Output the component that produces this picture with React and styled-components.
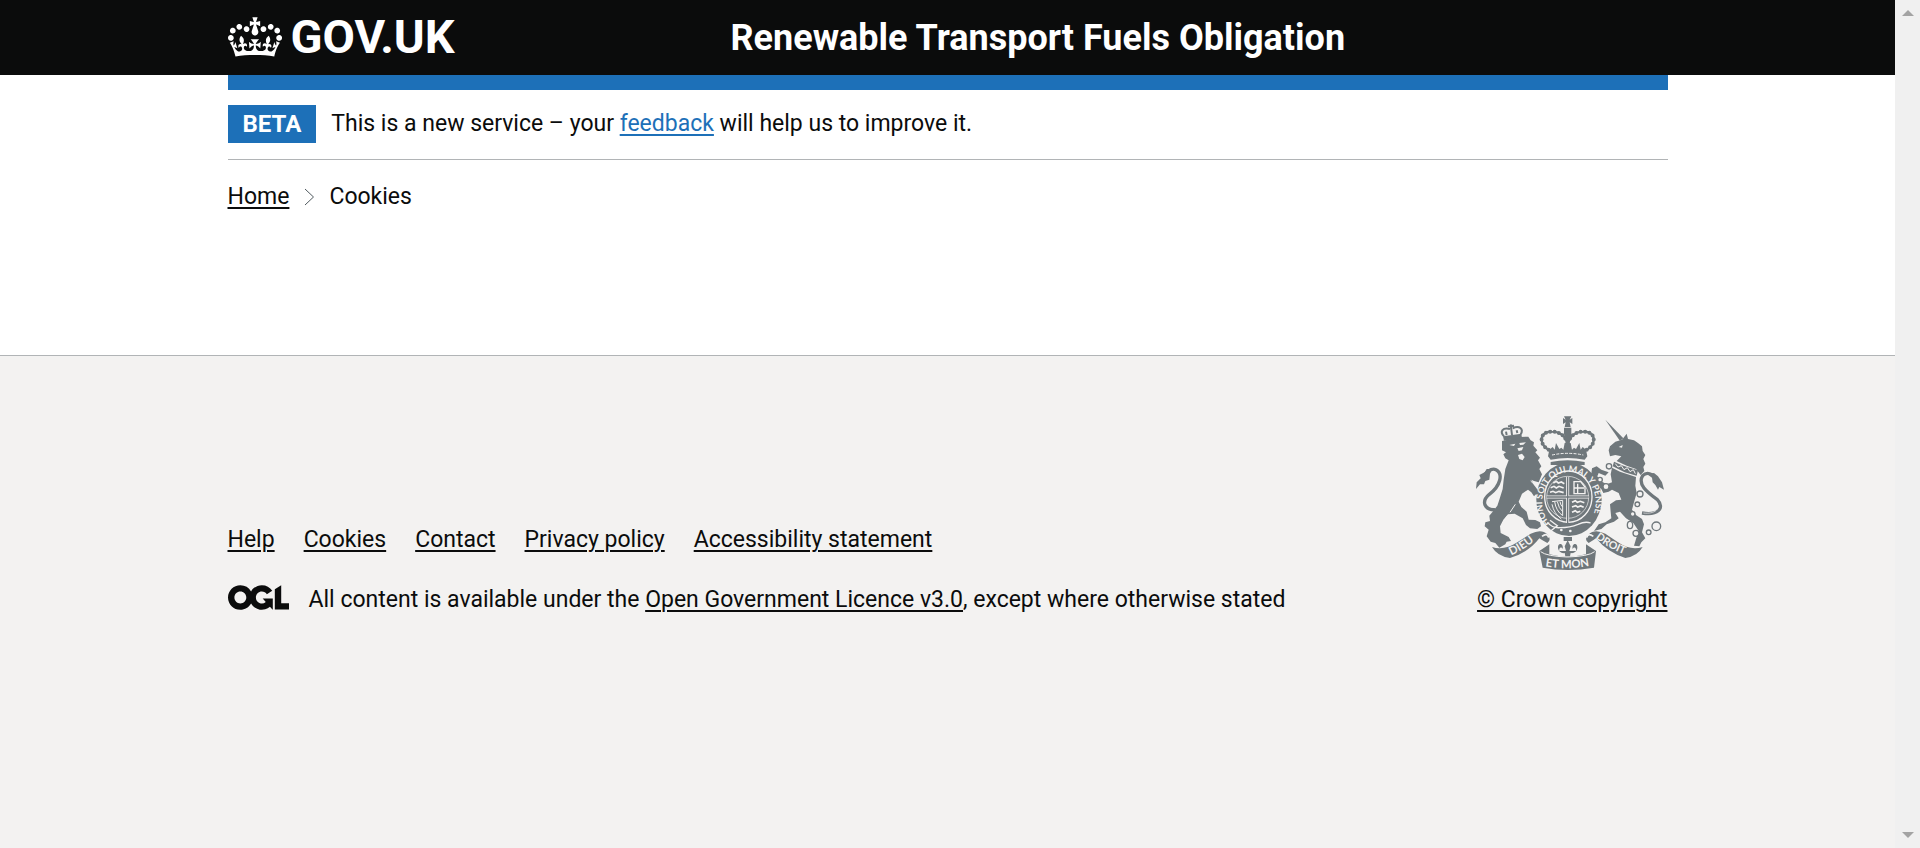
import React from "react";
import styled, { createGlobalStyle } from "styled-components";

const ink = "#0b0c0c";
const blue = "#1d70b8";
const rule = "#b1b4b6";
const crestGrey = "#6f777b";
const paper = "#f3f2f1";

const GlobalStyle = createGlobalStyle`
  *, *::before, *::after { box-sizing: border-box; }
  body {
    margin: 0;
    background: ${paper};
    color: ${ink};
    font-family: Roboto, "Liberation Sans", sans-serif;
    font-size: 23px;
    line-height: 30px;
  }
`;

const Shell = styled.div`
  display: flex;
  min-height: 100vh;
`;

const Page = styled.div`
  flex: 1;
  min-width: 0;
  display: flex;
  flex-direction: column;
`;

const Container = styled.div`
  width: calc(100% - 60px);
  max-width: 1440px;
  margin: 0 auto;
`;

const Header = styled.header`
  background: ${ink};
  color: #fff;
`;

const HeaderRow = styled(Container)`
  display: grid;
  grid-template-columns: 503px 1fr;
  align-items: center;
  height: 75px;
`;

const LogoLink = styled.a`
  display: flex;
  align-items: center;
  gap: 9px;
  padding-bottom: 2px;
  color: #fff;
  font-size: 47px;
  font-weight: 700;
  line-height: 45px;
  text-decoration: none;
`;

const ServiceLink = styled.a`
  color: #fff;
  font-size: 36px;
  font-weight: 700;
  line-height: 40px;
  text-decoration: none;
  white-space: nowrap;
`;

const Main = styled.div`
  background: #fff;
  padding-bottom: 143px;
`;

const BlueBar = styled.div`
  height: 15px;
  background: ${blue};
`;

const PhaseBanner = styled.div`
  display: flex;
  align-items: center;
  gap: 15px;
  padding: 15px 0 16px;
  border-bottom: 1px solid ${rule};
`;

const Tag = styled.strong`
  padding: 4px 15px;
  background: ${blue};
  color: #fff;
  font-size: 24px;
  font-weight: 700;
`;

const Message = styled.p`
  margin: 0;
`;

const Link = styled.a`
  color: ${({ $tone }) => ($tone === "blue" ? blue : ink)};
  text-decoration: underline;
  text-decoration-thickness: 2px;
  text-underline-offset: 3px;
`;

const Breadcrumbs = styled.ol`
  display: flex;
  align-items: center;
  gap: 14px;
  margin: 0;
  padding: 22px 0 0;
  list-style: none;
`;

const Crumb = styled.li`
  display: flex;
  align-items: center;
  gap: 15px;
`;

const Footer = styled.footer`
  flex: 1;
  padding: 60px 0;
  border-top: 1px solid ${rule};
  background: ${paper};
`;

const FooterRow = styled(Container)`
  display: flex;
  justify-content: space-between;
  align-items: flex-end;
`;

const FooterLinks = styled.ul`
  display: flex;
  flex-wrap: wrap;
  gap: 29px;
  margin: 0 0 30px;
  padding: 0;
  list-style: none;
`;

const Licence = styled.div`
  display: flex;
  align-items: flex-start;
  gap: 20px;
`;

const Copyright = styled.a`
  display: flex;
  flex-direction: column;
  align-items: flex-end;
  gap: 15px;
  color: ${ink};
  text-decoration: underline;
  text-decoration-thickness: 2px;
  text-underline-offset: 3px;
  white-space: nowrap;
`;

const CrestDrawing = styled.svg`
  margin-right: 4px;
`;

const ScrollTrack = styled.div`
  flex: none;
  display: flex;
  flex-direction: column;
  justify-content: space-between;
  align-items: center;
  width: 25px;
  padding: 10px 0;
  background: #f0f0f0;
`;

function Crown() {
  return (
    <svg width="54" height="40" viewBox="0 0 132 97" fill="currentColor" aria-hidden="true">
      <path d="M25 30.2c3.5 1.5 7.7-.2 9.1-3.7 1.5-3.6-.2-7.8-3.9-9.2-3.6-1.4-7.6.3-9.1 3.9-1.4 3.5.3 7.5 3.9 9zM9 39.5c3.6 1.5 7.8-.2 9.2-3.7 1.5-3.6-.2-7.8-3.9-9.1-3.6-1.5-7.6.2-9.1 3.8-1.4 3.5.3 7.5 3.8 9zM4.4 57.2c3.5 1.5 7.7-.2 9.1-3.8 1.5-3.6-.2-7.7-3.9-9.1-3.5-1.5-7.6.3-9.1 3.8-1.4 3.5.3 7.6 3.9 9.1zm38.3-21.4c3.5 1.5 7.7-.2 9.1-3.8 1.5-3.6-.2-7.7-3.9-9.1-3.6-1.5-7.6.3-9.1 3.8-1.3 3.6.4 7.7 3.9 9.1zm64.4-5.6c-3.6 1.5-7.8-.2-9.1-3.7-1.5-3.6.2-7.8 3.8-9.2 3.6-1.4 7.7.3 9.2 3.9 1.3 3.5-.4 7.5-3.9 9zm15.9 9.3c-3.6 1.5-7.7-.2-9.1-3.7-1.5-3.6.2-7.8 3.7-9.1 3.6-1.5 7.7.2 9.2 3.8 1.5 3.5-.3 7.5-3.8 9zm4.7 17.7c-3.6 1.5-7.8-.2-9.2-3.8-1.5-3.6.2-7.7 3.9-9.1 3.6-1.5 7.7.3 9.2 3.8 1.3 3.5-.4 7.6-3.9 9.1zM89.3 35.8c-3.6 1.5-7.8-.2-9.2-3.8-1.4-3.6.2-7.7 3.9-9.1 3.6-1.5 7.7.3 9.2 3.8 1.4 3.6-.3 7.7-3.9 9.1zM69.7 17.7l8.9 4.7V9.3l-8.9 2.8c-.2-.3-.5-.6-.9-.9L72.4 0H59.6l3.5 11.2c-.3.3-.6.5-.9.9l-8.8-2.8v13.1l8.8-4.7c.3.3.6.7.9.9l-5 15.4v.1c-.2.8-.4 1.6-.4 2.4 0 4.1 3.1 7.5 7 8.1h.2c.3 0 .7.1 1 .1.4 0 .7 0 1-.1h.2c4-.6 7.1-4.1 7.1-8.1 0-.8-.1-1.7-.4-2.4V34l-5.1-15.4c.4-.2.7-.6 1-.9zM66 92.8c16.9 0 32.8 1.1 47.1 3.2 4-16.9 8.9-26.7 14-33.5l-9.6-3.4c1 4.9 1.1 7.2 0 10.2-1.5-1.4-3-4.3-4.2-8.7L108.6 76c2.8-2 5-3.2 7.5-3.3-4.4 9.4-10 11.9-13.6 11.2-4.3-.8-6.3-4.6-5.6-7.9 1-4.7 5.7-5.9 8-.5 4.3-8.7-3-11.4-7.6-8.8 7.1-7.2 7.9-13.5 2.1-21.1-8 6.1-8.1 12.3-4.5 20.8-4.7-5.4-12.1-2.5-9.5 6.2 3.4-5.2 7.9-2 7.2 3.1-.6 4.3-6.4 7.8-13.5 7.2-10.3-.9-10.9-8-11.2-13.8 2.5-.5 7.1 1.8 11 7.3L80.2 60c-4.1 4.4-8 5.3-12.3 5.4 1.4-4.4 8-11.6 8-11.6H55.5s6.4 7.2 7.9 11.6c-4.2-.1-8-1-12.3-5.4l1.4 16.4c3.9-5.5 8.5-7.7 10.9-7.3-.3 5.8-.9 12.8-11.1 13.8-7.2.6-12.9-2.9-13.5-7.2-.7-5 3.8-8.3 7.1-3.1 2.7-8.7-4.6-11.6-9.4-6.2 3.7-8.5 3.6-14.7-4.6-20.8-5.8 7.6-5 13.9 2.2 21.1-4.7-2.6-11.9.1-7.7 8.8 2.3-5.5 7.1-4.2 8.1.5.7 3.3-1.3 7.1-5.7 7.9-3.5.7-9-1.8-13.5-11.2 2.5.1 4.7 1.3 7.5 3.3l-4.7-15.4c-1.2 4.4-2.7 7.2-4.3 8.7-1.1-3-.9-5.3 0-10.2l-9.5 3.4c5 6.9 9.9 16.7 14 33.5 14.8-2.1 30.8-3.2 47.7-3.2z" />
    </svg>
  );
}

function OglMark() {
  return (
    <svg width="61" height="25" viewBox="0 0 483.2 195.7" fill="currentColor" aria-hidden="true">
      <path d="M421.5 142.8V.1l-50.7 32.3v161.1h112.4v-50.7zm-122.3-9.6A47.12 47.12 0 0 1 221 97.8c0-26 21.1-47.1 47.1-47.1 16.7 0 31.4 8.7 39.7 21.8l42.7-27.2A97.63 97.63 0 0 0 268.1 0c-36.5 0-68.3 20.1-85.1 49.7A98 98 0 0 0 97.8 0C43.9 0 0 43.9 0 97.8s43.9 97.8 97.8 97.8c36.5 0 68.3-20.1 85.1-49.7a97.76 97.76 0 0 0 149.6 25.4l19.4 22.2h3v-87.8h-80l24.3 27.5zM97.8 145c-26 0-47.1-21.1-47.1-47.1s21.1-47.1 47.1-47.1 47.1 21.1 47.1 47.1S123.8 145 97.8 145" />
    </svg>
  );
}

function Crest() {
  return (
    <CrestDrawing width="188" height="154" viewBox="48 31 564 462" fill={crestGrey} aria-hidden="true">
      <defs>
        <path id="garter" d="M270 354 A80 91 0 1 1 384 354" />
        <path id="dieu" d="M154 449 Q196 430 238 394" />
        <path id="droit" d="M406 397 Q450 432 504 450" />
        <path id="mon" d="M256 482 Q322 494 396 479" />
      </defs>

      {/* lion's tail */}
      <path d="M106 312C74 314 62 288 88 266C122 240 130 204 108 192C94 186 78 200 66 216" fill="none" stroke={crestGrey} strokeWidth="10" />
      <path d="M104 306C80 304 74 288 94 270" fill="none" stroke={paper} strokeWidth="2" />
      <path d="M48 250L50 230L62 218L58 208L74 200L80 190L98 190L90 204L88 222L76 226L72 236L60 236Z" />

      {/* lion */}
      <path d="M126 106L150 101L180 94L205 93L212 104L222 110L220 120L232 134L226 140L240 156L234 164L244 182L238 190L246 206L236 230L222 226L214 222L222 238L231 250L240 272L228 266L222 272L214 260L204 252L186 264L176 288L184 304L200 318L206 342L226 343L240 350L243 362L232 370L210 368L198 358L188 338L164 324L144 326L130 342L120 362L122 382L146 394L153 406L140 408L136 416L118 426L106 412L92 408L80 392L86 372L74 362L76 350L90 346L88 330L98 318L112 300L118 282L128 250L131 222L136 190L146 164L136 158L130 146L138 140L126 134Z" />
      <path d="M148 118L166 114L162 121ZM178 112L198 110L190 117L180 118ZM172 128L190 124L186 134L176 136ZM174 148L186 144L194 154L188 164L178 160Z" fill={paper} />
      <path d="M212 226L250 262M150 320L166 296M132 346L142 330" fill="none" stroke={paper} strokeWidth="3" />

      {/* lion's crown */}
      <path d="M129 92L184 84L186 97L132 105Z" />
      <path d="M132 92C118 78 128 64 150 70M182 86C192 70 178 58 158 68M156 88L152 56M144 62L162 60" fill="none" stroke={crestGrey} strokeWidth="6" />
      <path d="M140 88L138 78M172 82L170 74" stroke={crestGrey} strokeWidth="6" />

      {/* unicorn */}
      <path d="M436 42L490 98L480 106Z" />
      <path d="M446 134L450 122L466 108L486 102L500 84L504 100L522 104L534 112L546 122L548 136L556 148L550 160L556 174L550 184L553 196L542 208L528 190L500 180L470 166L484 152L466 148L450 152Z" />
      <path d="M476 124L488 118L486 126Z" fill={paper} />
      <path d="M462 168L490 180L534 194L530 210L494 200L458 182Z" />
      <path d="M466 174L474 184L484 180L492 192L502 186L510 198L520 192L526 204" fill="none" stroke={paper} strokeWidth="3" />
      <path d="M456 186L480 198L528 214L526 240L530 262L522 290L516 312L528 328L546 340L552 356L546 380L556 398L544 410L538 422L522 420L528 400L536 376L520 352L498 338L480 318L466 322L476 338L462 348L440 356L424 370L402 376L416 356L436 350L454 338L452 318L450 296L468 284L484 282L476 262L456 252L446 258L430 262L424 250L410 240L402 220L394 204L396 188L410 182L424 192L446 200L436 210L416 202L412 212L422 226L440 236L456 230L452 206Z" />
      <path d="M546 322C592 330 616 308 592 282C560 258 532 236 548 210C566 192 588 214 592 230" fill="none" stroke={crestGrey} strokeWidth="10" />
      <path d="M550 322C584 326 604 310 588 288" fill="none" stroke={paper} strokeWidth="2" />
      <path d="M562 206L582 202L594 212L606 230L612 252L598 244L594 252L586 238L578 230L576 216Z" />
      <g fill={paper} stroke={crestGrey} strokeWidth="4">
        <circle cx="447" cy="182" r="8" />
        <circle cx="420" cy="222" r="7" />
        <circle cx="438" cy="243" r="9" />
        <circle cx="540" cy="265" r="9" />
        <circle cx="532" cy="296" r="7" />
        <circle cx="518" cy="325" r="7" />
        <ellipse cx="510" cy="358" rx="8" ry="11" />
        <circle cx="528" cy="383" r="9" />
        <circle cx="566" cy="380" r="7" />
        <circle cx="589" cy="362" r="13" />
      </g>

      {/* crown above the shield */}
      <path d="M312 32H334L329 42L337 37V55L329 50L332 64H314L317 50L309 55V37L317 42Z" />
      <path d="M278 138C232 122 236 76 276 78C298 78 314 90 318 104M368 138C414 122 410 76 370 78C348 78 332 90 328 104" fill="none" stroke={crestGrey} strokeWidth="7" />
      <path d="M278 138C232 122 236 76 276 78C298 78 314 90 318 104M368 138C414 122 410 76 370 78C348 78 332 90 328 104" fill="none" stroke={crestGrey} strokeWidth="12" strokeLinecap="round" strokeDasharray="0 13" />
      <path d="M312 66H334V84L328 120H318L312 84Z" />
      <path d="M268 132L278 124L284 132L288 112L298 130L304 126L310 132L314 112H332L336 132L342 126L348 130L358 112L362 132L368 124L378 132L382 152L374 162Q323 152 272 162L264 152Z" />
      <path d="M276 148Q323 138 370 148" fill="none" stroke={paper} strokeWidth="3" strokeDasharray="9 4" />
      <path d="M272 169Q323 159 374 169V178H272Z" />

      {/* garter and shield */}
      <ellipse cx="327" cy="281" rx="98" ry="110" />
      <ellipse cx="325" cy="273" rx="71" ry="77" fill="none" stroke={paper} strokeWidth="4" />
      <circle cx="323" cy="275" r="63" fill="none" stroke={paper} strokeWidth="2" />
      <path d="M323 214V352M260 274H386" stroke={paper} strokeWidth="9" />
      <path d="M323 214V352M260 274H386" stroke={crestGrey} strokeWidth="4" />
      <path d="M280 232l9-5 6 5 9-3 9 5M272 246l10-4 7 5 8-5 14 5M270 260l9-3 8 4 10-4 14 4M336 290l10-5 6 5 9-3 12 4M336 304l11-4 6 4 9-3 9 4M336 320l10-5 6 5 9-3" fill="none" stroke={paper} strokeWidth="5" />
      <path d="M342 228h20l13 16v20h-33zM353 266v-32M342 247h30" fill="none" stroke={paper} strokeWidth="4" />
      <path d="M276 288l32-4v46M284 288q4 28 24 42M292 288q4 20 16 30M300 288q2 12 8 16M276 296q6 28 28 44" fill="none" stroke={paper} strokeWidth="3" />
      <path d="M262 350Q278 368 300 366Q330 366 354 356Q376 346 392 352" fill="none" stroke={paper} strokeWidth="4" />
      <path d="M270 344L292 360L272 376" fill="none" stroke={paper} strokeWidth="4" />
      <circle cx="304" cy="373" r="4" fill={paper} />
      <circle cx="331" cy="376" r="4" fill={paper} />

      {/* motto ribbons */}
      <path d="M96 424Q132 436 172 410L212 384Q244 368 262 386Q276 402 262 412Q246 404 238 398Q206 440 150 457Q112 452 96 424Z" />
      <path d="M548 424Q512 436 474 410L436 384Q404 368 386 386Q370 402 386 412Q400 404 408 398Q442 440 496 457Q532 452 548 424Z" />
      <path d="M246 392Q262 380 266 396M400 392Q384 380 380 396" fill="none" stroke={paper} strokeWidth="5" />
      <path d="M238 436L268 416V446Q322 460 378 446V416L408 436L402 486Q323 500 248 486Z" />
      <path d="M242 438Q260 452 322 454Q386 452 404 438" fill="none" stroke={paper} strokeWidth="3" />
      <path d="M311 394H336V406H311ZM323 404L332 422L328 436H348C350 426 342 422 338 430C334 412 354 408 352 428C350 438 342 444 332 442L330 452H316L314 442C304 444 296 438 294 428C292 408 312 412 308 430C304 422 296 426 298 436H318L314 422Z" />

      <g fill={paper} fontFamily="Lato, sans-serif" fontWeight="700">
        <text fontSize="27"><textPath href="#garter">HONI SOIT QUI MAL Y PENSE</textPath></text>
        <text fontSize="34"><textPath href="#dieu">DIEU</textPath></text>
        <text fontSize="32"><textPath href="#droit">DROIT</textPath></text>
        <text fontSize="34"><textPath href="#mon">ET MON</textPath></text>
      </g>
    </CrestDrawing>
  );
}

const footerLinks = ["Help", "Cookies", "Contact", "Privacy policy", "Accessibility statement"];

export default function App() {
  return (
    <Shell>
      <GlobalStyle />
      <Page>
        <Header>
          <HeaderRow>
            <LogoLink href="#"><Crown />GOV.UK</LogoLink>
            <ServiceLink href="#">Renewable Transport Fuels Obligation</ServiceLink>
          </HeaderRow>
        </Header>
        <Main>
          <Container>
            <BlueBar />
            <PhaseBanner>
              <Tag>BETA</Tag>
              <Message>
                This is a new service – your <Link href="#" $tone="blue">feedback</Link> will help us to improve it.
              </Message>
            </PhaseBanner>
            <nav aria-label="Breadcrumb">
              <Breadcrumbs>
                <Crumb>
                  <Link href="#">Home</Link>
                  <svg width="11" height="18" viewBox="0 0 11 18" fill="none" stroke="#505a5f" aria-hidden="true">
                    <path d="M1 1L9.500 9L1 17" />
                  </svg>
                </Crumb>
                <Crumb aria-current="page">Cookies</Crumb>
              </Breadcrumbs>
            </nav>
          </Container>
        </Main>
        <Footer>
          <FooterRow>
            <div>
              <FooterLinks>
                {footerLinks.map((label) => (
                  <li key={label}><Link href="#">{label}</Link></li>
                ))}
              </FooterLinks>
              <Licence>
                <OglMark />
                <Message>
                  All content is available under the <Link href="#">Open Government Licence v3.0</Link>, except where otherwise stated
                </Message>
              </Licence>
            </div>
            <Copyright href="#"><Crest />© Crown copyright</Copyright>
          </FooterRow>
        </Footer>
      </Page>
      <ScrollTrack aria-hidden="true">
        <svg width="12" height="6" viewBox="0 0 12 6" fill="#a3a3a3"><path d="M6 0L12 6H0Z" /></svg>
        <svg width="12" height="6" viewBox="0 0 12 6" fill="#a3a3a3"><path d="M6 6L12 0H0Z" /></svg>
      </ScrollTrack>
    </Shell>
  );
}
